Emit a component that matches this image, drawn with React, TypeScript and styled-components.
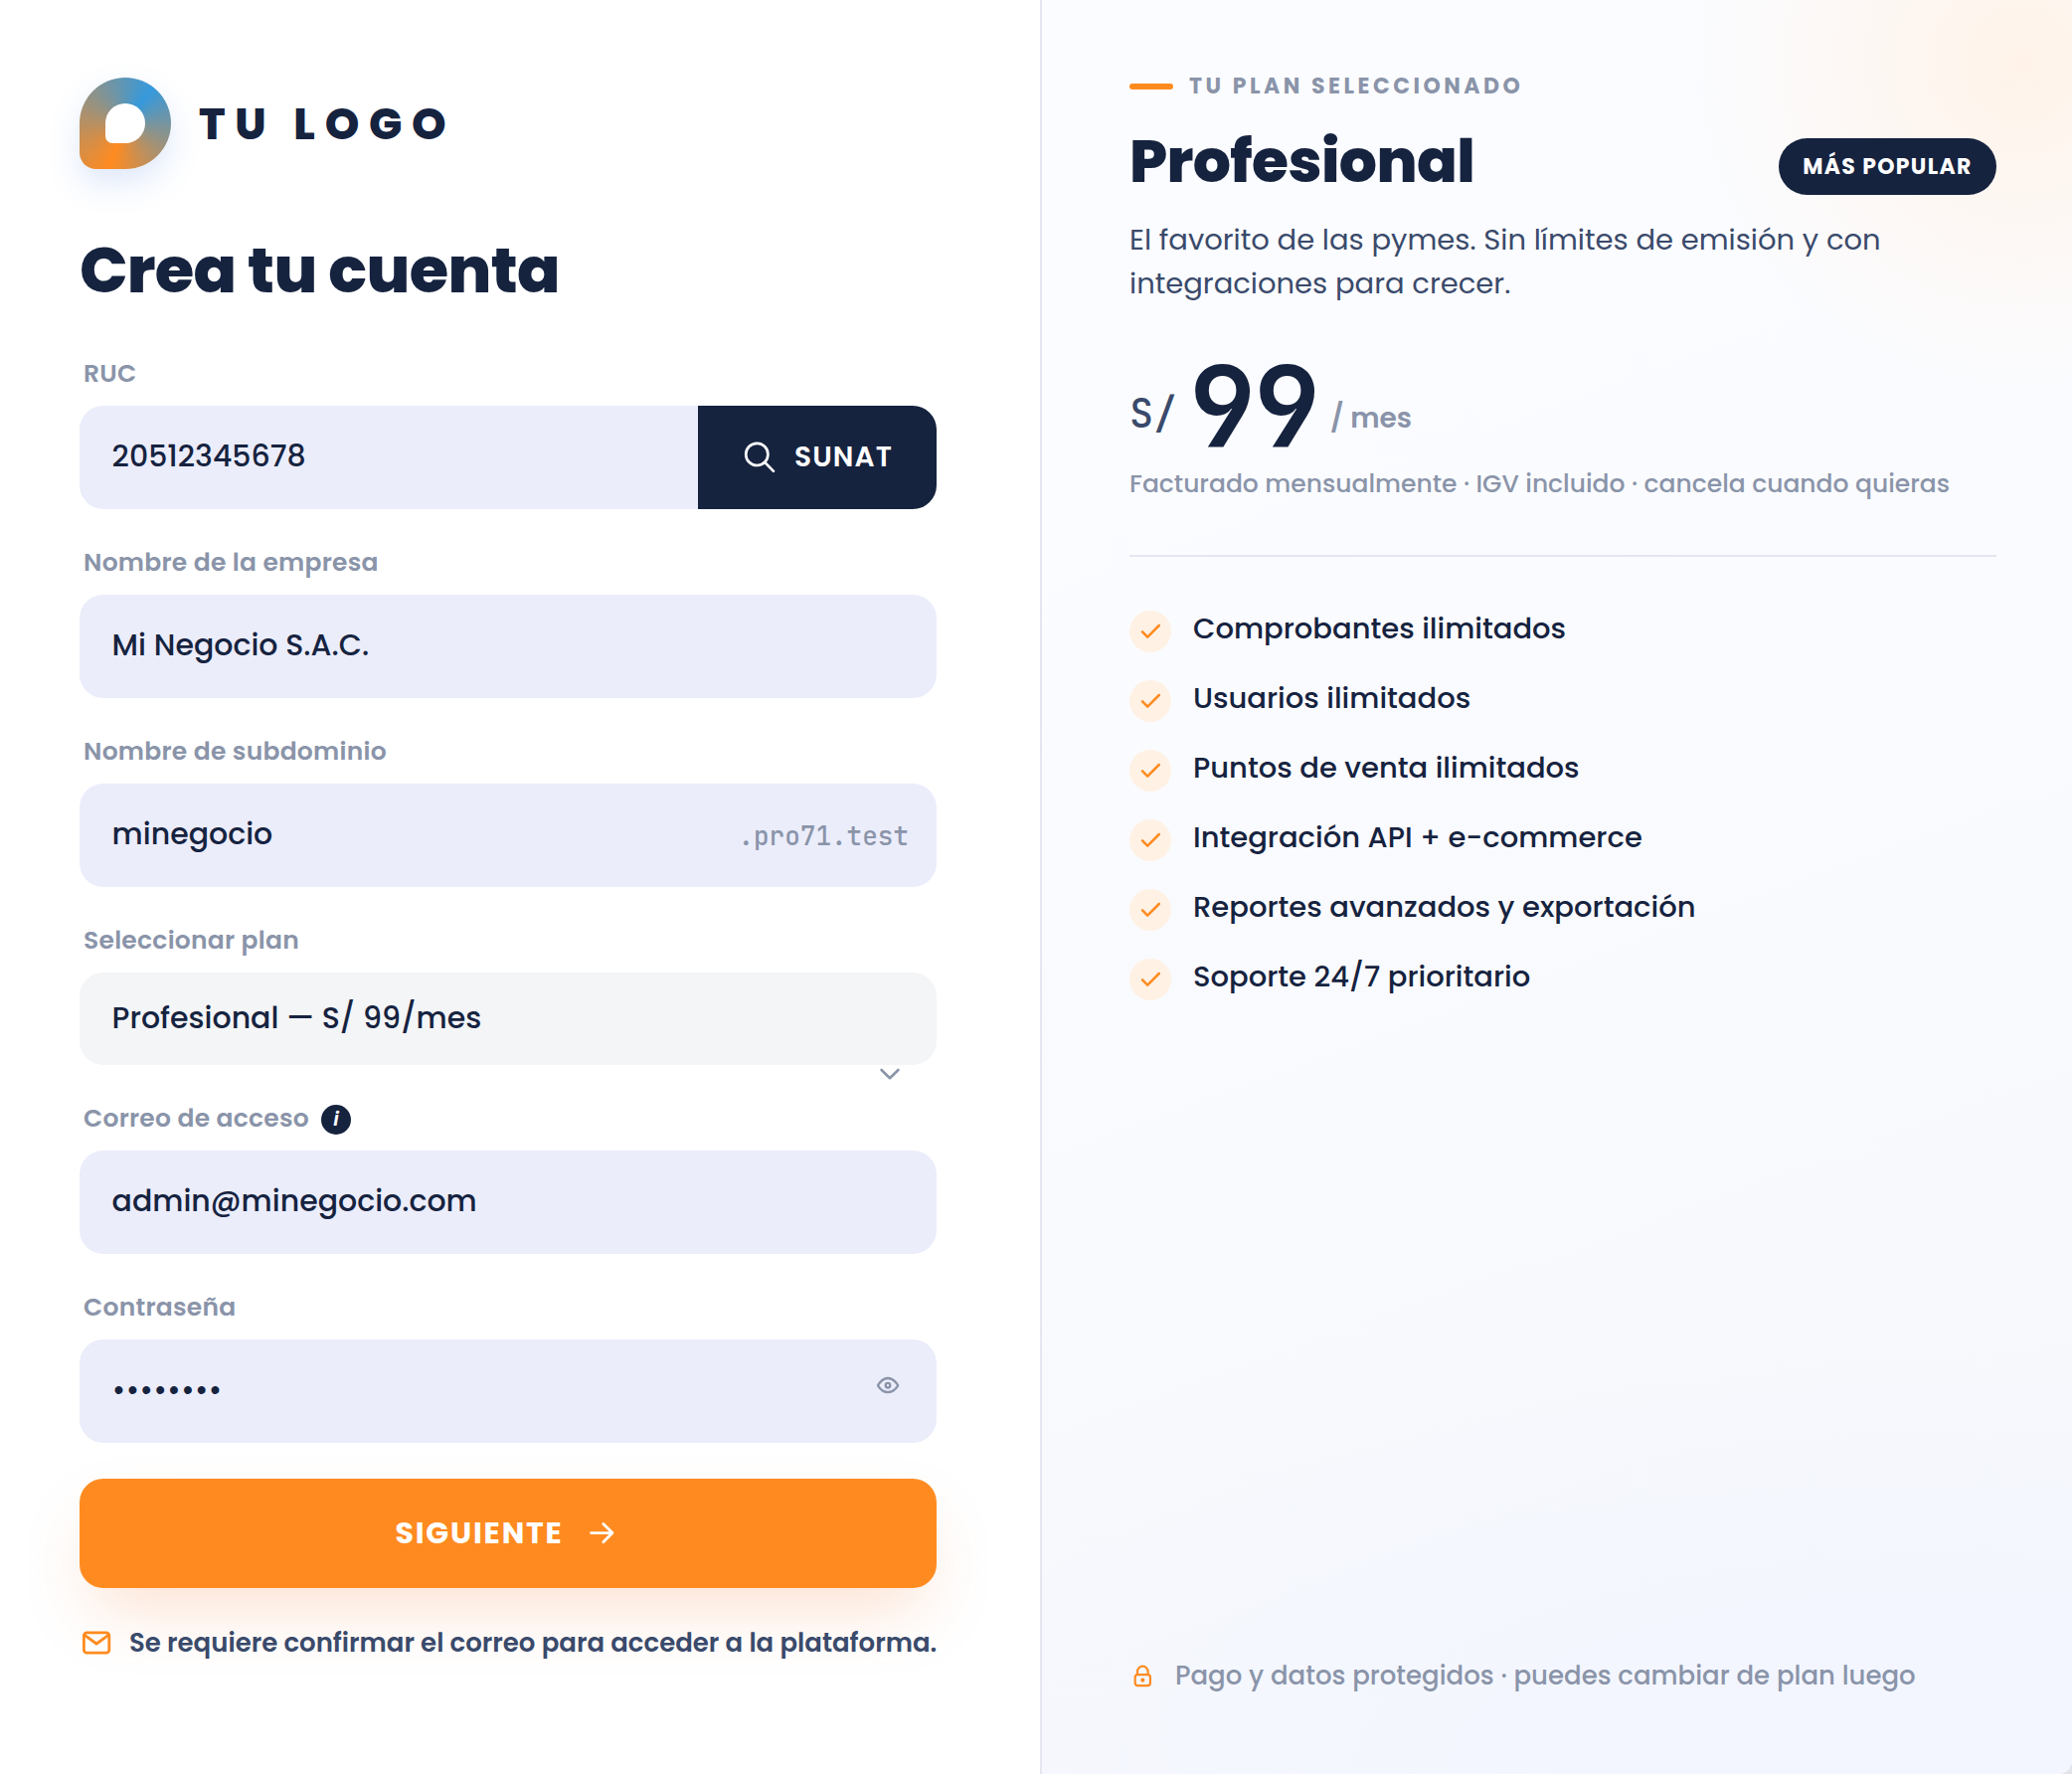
import React from "react";
import styled, { createGlobalStyle } from "styled-components";

const navy = "#16233f";
const slate = "#3a4a6b";
const muted = "#8a94a9";
const orange = "#ff8b20";
const mono = '"JetBrains Mono", "DejaVu Sans Mono", monospace';

const features = [
  "Comprobantes ilimitados",
  "Usuarios ilimitados",
  "Puntos de venta ilimitados",
  "Integración API + e-commerce",
  "Reportes avanzados y exportación",
  "Soporte 24/7 prioritario",
];

const App = () => (
  <>
    <GlobalStyle />
    <Page>
      <FormPanel>
        <Brand>
          <LogoMark />
          <BrandName>TU LOGO</BrandName>
        </Brand>
        <Title>Crea tu cuenta</Title>

        <Field>
          <Label>RUC</Label>
          <Group>
            <Input>
              <Value>20512345678</Value>
            </Input>
            <SunatButton>
              <SearchIcon />
              SUNAT
            </SunatButton>
          </Group>
        </Field>

        <Field>
          <Label>Nombre de la empresa</Label>
          <Input>
            <Value>Mi Negocio S.A.C.</Value>
          </Input>
        </Field>

        <Field>
          <Label>Nombre de subdominio</Label>
          <Input>
            <Value>minegocio</Value>
            <Suffix>.pro71.test</Suffix>
          </Input>
        </Field>

        <Field>
          <Label>Seleccionar plan</Label>
          <Select>
            <Value>Profesional — S/ 99/mes</Value>
            <Chevron viewBox="0 0 24 24">
              <path d="M3.6 8l8.4 8.2L20.4 8" />
            </Chevron>
          </Select>
        </Field>

        <Field>
          <Label>
            Correo de acceso
            <Info>i</Info>
          </Label>
          <Input>
            <Value>admin@minegocio.com</Value>
          </Input>
        </Field>

        <Field>
          <Label>Contraseña</Label>
          <Input>
            <Value>••••••••</Value>
            <Eye viewBox="0 0 24 24">
              <path d="M2 12.2S5.6 5 12 5s10.2 7.2 10.2 7.2-3.8 7-10.2 7S2 12.2 2 12.2z" />
              <circle cx="12" cy="12.2" r="2.3" />
            </Eye>
          </Input>
        </Field>

        <NextButton>
          SIGUIENTE
          <ArrowIcon />
        </NextButton>

        <Notice>
          <MailIcon />
          Se requiere confirmar el correo para acceder a la plataforma.
        </Notice>
      </FormPanel>

      <PlanPanel>
        <Eyebrow>TU PLAN SELECCIONADO</Eyebrow>
        <PlanHeader>
          <PlanName>Profesional</PlanName>
          <Badge>MÁS POPULAR</Badge>
        </PlanHeader>
        <Description>
          El favorito de las pymes. Sin límites de emisión y con integraciones para crecer.
        </Description>
        <Price>
          <Currency>S/</Currency>
          <Amount>99</Amount>
          <Period>/ mes</Period>
        </Price>
        <Billing>Facturado mensualmente · IGV incluido · cancela cuando quieras</Billing>
        <Divider />
        <FeatureList>
          {features.map((text) => (
            <Feature key={text}>
              <Tick>
                <CheckIcon />
              </Tick>
              <FeatureText>{text}</FeatureText>
            </Feature>
          ))}
        </FeatureList>
        <Secure>
          <LockIcon />
          Pago y datos protegidos · puedes cambiar de plan luego
        </Secure>
      </PlanPanel>
    </Page>
  </>
);

const SearchIcon = () => (
  <Icon $size={32} $stroke={2.7} $color="#fff" viewBox="0 0 32 32">
    <circle cx="13.3" cy="12.9" r="11.1" />
    <path d="M21.4 21.1l8.6 8.8" />
  </Icon>
);

const ArrowIcon = () => (
  <Icon $size={36} $stroke={2.8} $color="#fff" viewBox="0 0 36 36">
    <path d="M5.6 17.6H27M17.8 8.4l9.2 9.2-9.2 9.2" />
  </Icon>
);

const MailIcon = () => (
  <Icon $size={34} $stroke={2.8} $color={orange} viewBox="0 0 34 34">
    <rect x="4.4" y="6.8" width="25.4" height="20.4" rx="3" />
    <path d="M4.8 9.2l12.3 8.8 12.3-8.8" />
  </Icon>
);

const CheckIcon = () => (
  <Icon $size={24} $stroke={2.5} $color={orange} viewBox="0 0 24 24">
    <path d="M4 12.4l5.2 5.2L20.8 6" />
  </Icon>
);

const LockIcon = () => (
  <Icon $size={26} $stroke={2.2} $color={orange} viewBox="0 0 26 26">
    <rect x="5.7" y="12.2" width="15.2" height="10.9" rx="2.5" />
    <path d="M8 12V9a5.3 5.3 0 0 1 10.6 0v3" />
    <circle cx="13.3" cy="17.6" r="1" />
  </Icon>
);

const GlobalStyle = createGlobalStyle`
  * {
    box-sizing: border-box;
  }

  body {
    margin: 0;
    background: #e1e4e9;
    color: ${navy};
    font-family: Poppins, Inter, sans-serif;
  }
`;

const Page = styled.div`
  display: grid;
  grid-template-columns: 1046px 1fr;
  height: 1784px;
  border-bottom-right-radius: 14px;
  overflow: hidden;
  background: #fff;
`;

const FormPanel = styled.section`
  display: flex;
  flex-direction: column;
  padding: 78px 104px 0 80px;
`;

const Brand = styled.div`
  display: flex;
  align-items: center;
  gap: 28px;
`;

const LogoMark = styled.div`
  display: flex;
  width: 92px;
  height: 92px;
  padding: 26px;
  border-radius: 50% 50% 50% 18%;
  background: conic-gradient(from 200deg, ${orange}, #3599dc 55%, ${orange});
  box-shadow: 0 14px 32px rgba(60, 120, 225, 0.17);

  &::after {
    content: "";
    flex: 1;
    border-radius: 50% 50% 50% 18%;
    background: #fff;
  }
`;

const BrandName = styled.span`
  font-size: 44px;
  font-weight: 800;
  letter-spacing: 0.22em;
`;

const Title = styled.h1`
  margin: 67px 0 15px;
  font-size: 64px;
  font-weight: 800;
  letter-spacing: -0.01em;
  line-height: 70px;
  white-space: nowrap;
`;

const Field = styled.div`
  margin-top: 38px;
`;

const Label = styled.div`
  display: flex;
  align-items: center;
  gap: 12px;
  height: 32px;
  margin: 0 0 16px 4px;
  color: ${muted};
  font-size: 25px;
  font-weight: 600;
  letter-spacing: 0.25px;
`;

const Info = styled.span`
  width: 30px;
  height: 30px;
  margin-top: 2px;
  border-radius: 50%;
  background: ${navy};
  color: #fff;
  font-size: 20px;
  font-style: italic;
  font-weight: 600;
  letter-spacing: 0;
  line-height: 29px;
  text-align: center;
`;

const Group = styled.div`
  display: flex;
  border-radius: 24px;
  overflow: hidden;

  > :first-child {
    flex: 1;
    border-radius: 0;
  }
`;

const Input = styled.div`
  position: relative;
  display: flex;
  align-items: center;
  justify-content: space-between;
  height: 104px;
  padding: 0 28px 2px 32.6px;
  border-radius: 24px;
  background: #ebedfb;
`;

const Select = styled(Input)`
  height: 93px;
  padding-bottom: 1px;
  background: #f3f5f7;
`;

const Value = styled.span`
  font-size: 30px;
  font-weight: 500;
`;

const Suffix = styled.span`
  padding-top: 2px;
  color: ${muted};
  font-family: ${mono};
  font-size: 26px;
  font-weight: 500;
`;

const SunatButton = styled.div`
  display: flex;
  align-items: center;
  justify-content: center;
  gap: 19px;
  width: 240px;
  padding: 0 0 1px 2px;
  background: ${navy};
  color: #fff;
  font-size: 28px;
  font-weight: 600;
  letter-spacing: 0.04em;
`;

const Icon = styled.svg<{ $size: number; $stroke: number; $color: string }>`
  flex: none;
  width: ${(props) => props.$size}px;
  height: ${(props) => props.$size}px;
  fill: none;
  stroke: ${(props) => props.$color};
  stroke-width: ${(props) => props.$stroke};
  stroke-linecap: round;
  stroke-linejoin: round;
`;

const Adornment = styled.svg`
  position: absolute;
  width: 24px;
  height: 24px;
  fill: none;
  stroke: ${muted};
  stroke-width: 2.3;
  stroke-linecap: round;
  stroke-linejoin: round;
`;

const Chevron = styled(Adornment)`
  top: 90px;
  right: 35px;
  stroke-width: 2.6;
`;

const Eye = styled(Adornment)`
  top: 34px;
  right: 37px;
`;

const NextButton = styled.div`
  display: flex;
  align-items: center;
  justify-content: center;
  gap: 22px;
  height: 110px;
  margin-top: 36px;
  border-radius: 24px;
  background: ${orange};
  box-shadow: 0 32px 68px -16px rgba(245, 125, 50, 0.25);
  color: #fff;
  font-size: 30px;
  font-weight: 700;
  letter-spacing: 0.06em;
`;

const Notice = styled.div`
  display: flex;
  align-items: center;
  gap: 16px;
  height: 34px;
  margin-top: 38px;
  color: ${slate};
  font-size: 26px;
  font-weight: 600;
  white-space: nowrap;
`;

const PlanPanel = styled.section`
  display: flex;
  flex-direction: column;
  padding: 72px 76px 79px 88px;
  border-left: 2px solid #e4e7f0;
  background:
    radial-gradient(circle 330px at calc(100% - 50px) 64px, #fff3e9, rgba(255, 245, 237, 0)),
    radial-gradient(1200px 440px at 88% 100%, #f3f6ff 30%, rgba(243, 246, 255, 0)),
    linear-gradient(160deg, #fbfcff 0%, #fbfcff 25%, #f6f8fc 85%);
`;

const Eyebrow = styled.div`
  display: flex;
  align-items: center;
  gap: 16px;
  color: ${muted};
  font-size: 22px;
  font-weight: 700;
  letter-spacing: 0.16em;
  line-height: 30px;

  &::before {
    content: "";
    width: 44px;
    height: 6px;
    border-radius: 3px;
    background: ${orange};
  }
`;

const PlanHeader = styled.div`
  display: flex;
  justify-content: space-between;
  height: 68px;
  margin-top: 26px;
`;

const PlanName = styled.h2`
  margin: 0;
  font-size: 60px;
  font-weight: 800;
  letter-spacing: -0.01em;
  line-height: 68px;
`;

const Badge = styled.span`
  width: 219px;
  height: 57px;
  margin-top: 11px;
  border-radius: 29px;
  background: ${navy};
  color: #fff;
  font-size: 22px;
  font-weight: 700;
  letter-spacing: 0.06em;
  line-height: 57px;
  text-align: center;
`;

const Description = styled.p`
  max-width: 800px;
  margin: 23px 0 0;
  color: ${slate};
  font-size: 29px;
  line-height: 44px;
`;

const Price = styled.div`
  display: flex;
  gap: 12px;
  height: 116px;
  margin-top: 39px;
  line-height: 40px;
`;

const Currency = styled.span`
  padding-top: 50px;
  color: ${slate};
  font-family: ${mono};
  font-size: 40px;
  font-weight: 500;
`;

const Amount = styled.span`
  font-family: ${mono};
  font-size: 112px;
  font-weight: 700;
  letter-spacing: -0.02em;
  line-height: 129px;
`;

const Period = styled.span`
  padding-top: 55px;
  color: ${muted};
  font-size: 28px;
  font-weight: 600;
`;

const Billing = styled.div`
  margin-top: 5px;
  color: ${muted};
  font-size: 25px;
  font-weight: 500;
  line-height: 40px;
  white-space: nowrap;
`;

const Divider = styled.div`
  height: 2px;
  margin-top: 51px;
  background: #e4e7f0;
`;

const FeatureList = styled.ul`
  display: flex;
  flex-direction: column;
  gap: 28px;
  margin: 54px 0 0;
  padding: 0;
  list-style: none;
`;

const Feature = styled.li`
  display: flex;
  gap: 22px;
`;

const Tick = styled.span`
  display: flex;
  align-items: center;
  justify-content: center;
  width: 42px;
  height: 42px;
  border-radius: 50%;
  background: #fff1e4;
`;

const FeatureText = styled.span`
  font-size: 29px;
  font-weight: 500;
  line-height: 36px;
`;

const Secure = styled.div`
  display: flex;
  align-items: center;
  gap: 20px;
  margin-top: auto;
  color: ${muted};
  font-size: 26px;
  font-weight: 500;
  line-height: 40px;
`;

export default App;
